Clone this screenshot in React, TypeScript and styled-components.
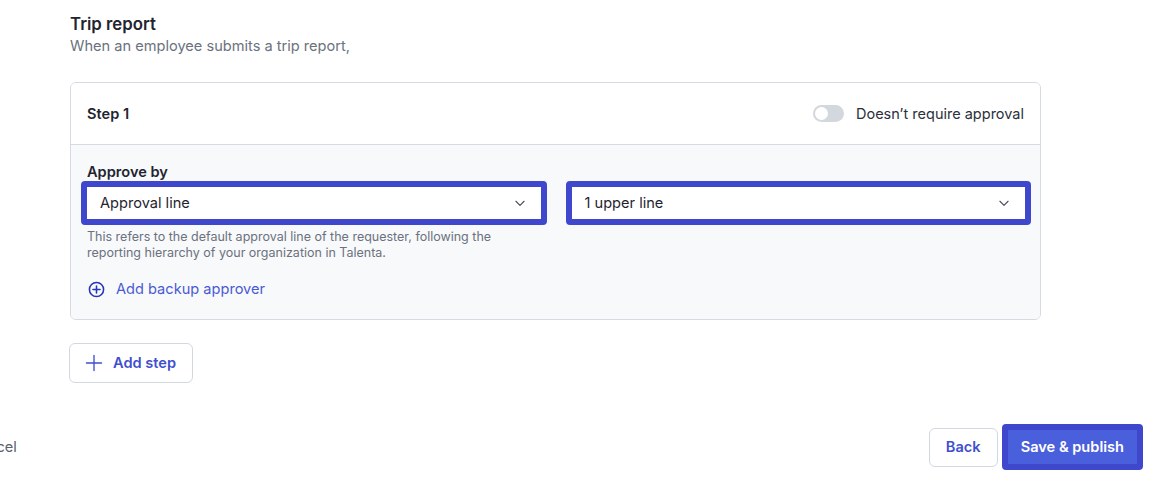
import React from "react";
import styled, { createGlobalStyle } from "styled-components";

const GlobalStyle = createGlobalStyle`
  html, body {
    margin: 0;
    padding: 0;
    background: #ffffff;
    font-family: Inter, "Noto Sans", "Liberation Sans", sans-serif;
    color: #1f2430;
  }
  * {
    box-sizing: border-box;
  }
`;

const Page = styled.div`
  width: 1166px;
  height: 489px;
  overflow: hidden;
  padding: 14px 23px 0 70px;
`;

const Section = styled.div`
  width: 971px;
`;

const Title = styled.h2`
  margin: 0;
  font-size: 16.8px;
  line-height: 20px;
  font-weight: 600;
  color: #1f2430;
`;

const Subtitle = styled.p`
  margin: 2px 0 0;
  font-size: 14.6px;
  line-height: 20px;
  color: #6b717d;
`;

const Card = styled.div`
  margin-top: 26px;
  border: 1px solid #d6dae1;
  border-radius: 6px;
  overflow: hidden;
`;

const CardHeader = styled.div`
  height: 62px;
  display: flex;
  align-items: center;
  justify-content: space-between;
  padding: 0 16px;
  background: #ffffff;
  border-bottom: 1px solid #d6dae1;
`;

const StepLabel = styled.span`
  font-size: 14.6px;
  font-weight: 600;
  color: #1f2430;
`;

const ToggleWrap = styled.label`
  display: flex;
  align-items: center;
  gap: 12px;
  font-size: 14.5px;
  color: #2b303b;
`;

const Track = styled.span`
  position: relative;
  width: 31px;
  height: 17px;
  border-radius: 9px;
  background: #d3d8df;
`;

const Knob = styled.span`
  position: absolute;
  left: 2px;
  top: 2px;
  width: 13px;
  height: 13px;
  border-radius: 50%;
  background: #ffffff;
`;

const CardBody = styled.div`
  background: #f8f9fb;
  padding: 17px 16px 20px;
`;

const FieldLabel = styled.div`
  font-size: 14.6px;
  line-height: 20px;
  font-weight: 600;
  color: #1f2430;
`;

const SelectRow = styled.div`
  display: grid;
  grid-template-columns: 1fr 1fr;
  gap: 19px;
  margin: -1px -7px 0 -6px;
`;

const Select = styled.div`
  height: 44px;
  display: flex;
  align-items: center;
  justify-content: space-between;
  padding: 0 14px 0 13px;
  background: #ffffff;
  border: 6px solid #3f48cc;
  border-radius: 4px;
  font-size: 14.6px;
  color: #1f2430;
`;

const Helper = styled.p`
  margin: 4px 0 0;
  font-size: 12.5px;
  line-height: 16px;
  color: #6b717d;
  max-width: 430px;
`;

const LinkButton = styled.button`
  margin-top: 18px;
  display: flex;
  align-items: center;
  gap: 11px;
  padding: 0 0 0 1px;
  border: none;
  background: none;
  font-family: inherit;
  font-size: 14.6px;
  line-height: 20px;
  color: #4a5ad4;
  cursor: pointer;
`;

const OutlineButton = styled.button`
  height: 40px;
  display: inline-flex;
  align-items: center;
  gap: 10px;
  padding: 0 16px 0 15px;
  border: 1px solid #d3d8df;
  border-radius: 6px;
  background: #ffffff;
  font-family: inherit;
  font-size: 14.6px;
  font-weight: 600;
  color: #3f4fd0;
  cursor: pointer;
`;

const AddStepWrap = styled.div`
  margin: 23px 0 0 -1px;
`;

const Footer = styled.div`
  margin: 41px 0 0 -101px;
  width: 1174px;
  display: flex;
  align-items: center;
  justify-content: space-between;
`;

const Cancel = styled.span`
  font-size: 14.6px;
  color: #5b616d;
`;

const Actions = styled.div`
  display: flex;
  align-items: center;
  gap: 4px;
`;

const BackButton = styled(OutlineButton)`
  height: 39px;
  padding: 0 16px;
`;

const PrimaryButton = styled.button`
  height: 46px;
  padding: 0 13px;
  border: 6px solid #3f48cc;
  border-radius: 4px;
  background: #4a5fdc;
  font-family: inherit;
  font-size: 14.6px;
  font-weight: 600;
  color: #ffffff;
  cursor: pointer;
`;

const Chevron = () => (
  <svg width="14" height="14" viewBox="0 0 24 24" fill="none" stroke="#4b5260" strokeWidth="2" strokeLinecap="round" strokeLinejoin="round">
    <path d="M5 9l7 7 7-7" />
  </svg>
);

const CirclePlus = () => (
  <svg width="17" height="17" viewBox="0 0 24 24" fill="none" stroke="#2636b8" strokeWidth="2.2" strokeLinecap="round">
    <circle cx="12" cy="12" r="10" />
    <path d="M12 7v10M7 12h10" />
  </svg>
);

const Plus = () => (
  <svg width="18" height="18" viewBox="0 0 24 24" fill="none" stroke="#3f4fd0" strokeWidth="1.8" strokeLinecap="round">
    <path d="M12 2v20M2 12h20" />
  </svg>
);

export default function App() {
  return (
    <>
      <GlobalStyle />
      <Page>
        <Section>
          <Title>Trip report</Title>
          <Subtitle>When an employee submits a trip report,</Subtitle>

          <Card>
            <CardHeader>
              <StepLabel>Step 1</StepLabel>
              <ToggleWrap>
                <Track>
                  <Knob />
                </Track>
                Doesn’t require approval
              </ToggleWrap>
            </CardHeader>
            <CardBody>
              <FieldLabel>Approve by</FieldLabel>
              <SelectRow>
                <Select>
                  <span>Approval line</span>
                  <Chevron />
                </Select>
                <Select>
                  <span>1 upper line</span>
                  <Chevron />
                </Select>
              </SelectRow>
              <Helper>
                This refers to the default approval line of the requester, following the reporting hierarchy of your organization in Talenta.
              </Helper>
              <LinkButton>
                <CirclePlus />
                Add backup approver
              </LinkButton>
            </CardBody>
          </Card>

          <AddStepWrap>
            <OutlineButton>
              <Plus />
              Add step
            </OutlineButton>
          </AddStepWrap>
        </Section>

        <Footer>
          <Cancel>Cancel</Cancel>
          <Actions>
            <BackButton>Back</BackButton>
            <PrimaryButton>Save &amp; publish</PrimaryButton>
          </Actions>
        </Footer>
      </Page>
    </>
  );
}
